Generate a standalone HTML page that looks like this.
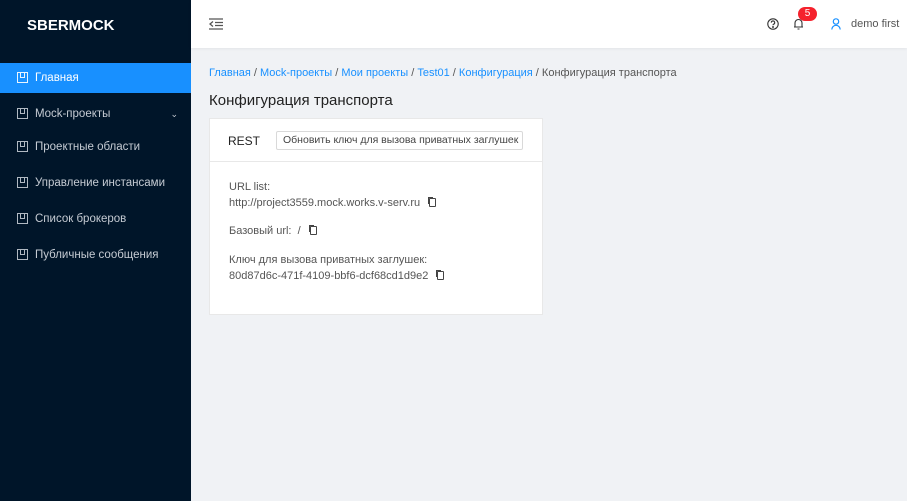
<!DOCTYPE html>
<html><head><meta charset="utf-8"><style>
*{box-sizing:border-box;margin:0;padding:0}
body{width:907px;height:501px;overflow:hidden;background:#f0f2f5;font-family:"Liberation Sans","Noto Sans CJK SC",sans-serif;font-size:12px;color:#333;position:relative}
.side{position:absolute;left:0;top:0;width:191px;height:501px;background:#001529}
.logo{position:absolute;left:27px;top:17px;color:#fff;font-weight:bold;font-size:15px}
.item{position:absolute;left:0;width:191px;height:30px;color:#c5cbd3;font-size:11.5px;line-height:30px;padding-left:35px}
.item.act{background:#1890ff;color:#fff}
.item i{position:absolute;left:17px;top:9px;width:11px;height:11px;border:1.5px solid currentColor;opacity:.9}
.item i:after{content:"";position:absolute;left:2px;top:0;width:3px;height:4px;border:1px solid currentColor;border-top:none}
.hdr{position:absolute;left:191px;top:0;width:716px;height:48px;background:#fff;box-shadow:0 1px 3px rgba(0,0,0,.06)}
.bc{position:absolute;left:209px;top:67px;font-size:11px;color:#555}
.bc a{color:#1890ff;text-decoration:none}
h1{position:absolute;left:209px;top:92px;font-size:15px;font-weight:normal;color:#222}
.card{position:absolute;left:209px;top:118px;width:334px;height:197px;background:#fff;border:1px solid #e8e8e8}
.ch{height:43px;border-bottom:1px solid #e8e8e8;position:relative}
.rest{position:absolute;left:18px;top:15px;font-size:12px;color:#222}
.btn{position:absolute;left:66px;top:12px;width:247px;height:19px;border:1px solid #d9d9d9;border-radius:2px;font-size:10.5px;line-height:17px;padding-left:6px;color:#444;white-space:nowrap;overflow:hidden}
.t{position:absolute;left:19px;font-size:11px;color:#555}
.cp{display:inline-block;width:7px;height:9px;border:1.3px solid #444;border-radius:1px;margin-left:9px;vertical-align:-1px;box-shadow:-2px -2px 0 -1px #444}
</style></head><body>
<div class="side">
<div class="logo">SBERMOCK</div>
<div class="item act" style="top:63px"><i></i>Главная</div>
<div class="item" style="top:99px"><i></i>Mock-проекты<span style="position:absolute;right:13px;font-size:9px">⌄</span></div>
<div class="item" style="top:132px"><i></i>Проектные области</div>
<div class="item" style="top:168px"><i></i>Управление инстансами</div>
<div class="item" style="top:204px"><i></i>Список брокеров</div>
<div class="item" style="top:240px"><i></i>Публичные сообщения</div>
</div>
<div class="hdr">
<svg style="position:absolute;left:18px;top:18px" width="14" height="12" viewBox="0 0 14 12" stroke="#555" stroke-width="1.3" fill="none"><path d="M0 1h14M6 4.5h8M6 7.5h8M0 11h14M4 3.5L1 6l3 2.5"/></svg>
<svg style="position:absolute;left:576px;top:18px" width="12" height="12" viewBox="0 0 12 12" fill="none" stroke="#333" stroke-width="1.1"><circle cx="6" cy="6" r="5.2"/><path d="M4.3 4.6a1.7 1.7 0 1 1 2.3 1.6c-.5.2-.6.6-.6 1.1"/><circle cx="6" cy="9" r=".4" fill="#333"/></svg>
<svg style="position:absolute;left:602px;top:17px" width="11" height="13" viewBox="0 0 11 13" fill="none" stroke="#333" stroke-width="1.1"><path d="M2 10V6a3.5 3.5 0 0 1 7 0v4M1 10h9M4.5 12h2"/></svg>
<div style="position:absolute;left:607px;top:7px;width:19px;height:14px;border-radius:7px;background:#f5222d;color:#fff;font-size:10px;text-align:center;line-height:14px">5</div>
<svg style="position:absolute;left:640px;top:18px" width="10" height="12" viewBox="0 0 10 12" fill="none" stroke="#1890ff" stroke-width="1.2"><circle cx="5" cy="3.5" r="2.7"/><path d="M.8 11.5a4.2 4.2 0 0 1 8.4 0"/></svg>
<div style="position:absolute;left:660px;top:18px;font-size:11px;color:#555">demo first</div>
</div>
<div class="bc"><a>Главная</a> / <a>Mock-проекты</a> / <a>Мои проекты</a> / <a>Test01</a> / <a>Конфигурация</a> / Конфигурация транспорта</div>
<h1>Конфигурация транспорта</h1>
<div class="card">
<div class="ch"><span class="rest">REST</span><span class="btn">Обновить ключ для вызова приватных заглушек</span></div>
<div class="t" style="top:62px">URL list:</div>
<div class="t" style="top:78px">http://project3559.mock.works.v-serv.ru<span class="cp"></span></div>
<div class="t" style="top:106px">Базовый url: &nbsp;/<span class="cp"></span></div>
<div class="t" style="top:135px">Ключ для вызова приватных заглушек:</div>
<div class="t" style="top:151px">80d87d6c-471f-4109-bbf6-dcf68cd1d9e2<span class="cp"></span></div>
</div>
</body></html>
